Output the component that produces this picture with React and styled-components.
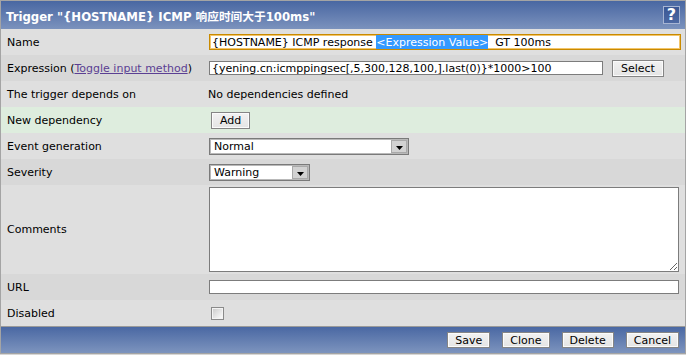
import React from "react";
import styled, { createGlobalStyle } from "styled-components";

const Global = createGlobalStyle`
  html, body { margin: 0; padding: 0; background: #d6d6d6; }
  body { font-family: "DejaVu Sans", Verdana, sans-serif; font-size: 11px; color: #000; }
  * { box-sizing: border-box; }
`;

const Frame = styled.div`
  width: 686px;
  border: 1px solid #a4a4a4;
  border-bottom: 1px solid #a4a4a4;
  background: #dedede;
`;

const Header = styled.div`
  height: 28px;
  display: flex;
  align-items: center;
  justify-content: space-between;
  padding: 0 5px 0 5px;
  background: linear-gradient(#4967a2, #7b92bd);
`;

const Title = styled.div`
  color: #fff;
  font-weight: bold;
  font-size: 11.7px;
  font-family: "DejaVu Sans", "Noto Sans CJK SC", sans-serif;
`;

const Help = styled.div`
  width: 17px;
  height: 18px;
  border: 1px solid #a7b5d3;
  background: linear-gradient(#3a5794, #4d69a3);
  color: #fff;
  font-weight: bold;
  font-size: 16px;
  line-height: 16px;
  text-align: center;
  font-family: "DejaVu Sans", sans-serif;
`;

const Row = styled.div`
  display: flex;
  align-items: center;
  min-height: ${(p) => p.$h || 26}px;
  background: ${(p) => (p.$green ? "#deedde" : p.$dark ? "#d8d8d8" : "#dfdfdf")};
`;

const Label = styled.div`
  width: 206px;
  flex: none;
  padding-left: 6px;
  white-space: nowrap;
`;

const Value = styled.div`
  flex: 1;
  display: flex;
  align-items: center;
  padding-left: ${(p) => p.$pl ?? 2}px;
`;

const Link = styled.a`
  color: #5b3f93;
  text-decoration: underline;
`;

const FakeInput = styled.div`
  width: ${(p) => p.$w}px;
  height: 16px;
  background: #fff;
  border: 1px solid #c98a00;
  box-shadow: inset 0 0 0 1px #f3c56a;
  display: flex;
  align-items: center;
  padding-left: 2px;
  white-space: pre;
  overflow: hidden;
`;

const Sel = styled.span`
  background: #3399ff;
  color: #fff;
  align-self: stretch;
  display: flex;
  align-items: center;
`;

const TextInput = styled.input`
  width: ${(p) => p.$w}px;
  height: ${(p) => p.$h || 14}px;
  border: 1px solid #7c7c7c;
  background: #fff;
  font-family: "DejaVu Sans", Verdana, sans-serif;
  font-size: 11px;
  padding: 0 2px;
  margin: 0;
  outline: none;
  color: #000;
`;

const Button = styled.button`
  height: ${(p) => p.$h || 17}px;
  padding: 0 ${(p) => p.$px ?? 7}px;
  margin-left: ${(p) => p.$ml || 0}px;
  border: 1px solid #858585;
  background: linear-gradient(#f2f2f2, #e4e4e4);
  box-shadow: inset 0 0 0 1px #fbfbfb;
  font-family: "DejaVu Sans", Verdana, sans-serif;
  font-size: 11px;
  color: #000;
  line-height: 13px;
  cursor: pointer;
`;

const SelectBox = styled.div`
  width: ${(p) => p.$w}px;
  height: 17px;
  border: 1px solid #7a7a7a;
  box-shadow: inset 0 0 0 1px #b9b9b9;
  background: #fff;
  display: flex;
  align-items: center;
  justify-content: space-between;
  padding: 0 1px 0 4px;
`;

const Arrow = styled.div`
  width: 16px;
  height: 13px;
  background: #d2d2d2;
  border: 1px solid #a9a9a9;
  display: flex;
  align-items: flex-end;
  justify-content: center;
  padding-bottom: 2px;
`;

const TextArea = styled.textarea`
  width: 470px;
  height: 85px;
  border: 1px solid #7c7c7c;
  margin: 0;
  background: #fff;
  font-family: "DejaVu Sans", sans-serif;
  font-size: 11px;
`;

const Check = styled.div`
  width: 13px;
  height: 13px;
  margin-left: 2px;
  border: 1px solid #8a8a8a;
  box-shadow: inset 0 0 0 1px #f4f4f4;
  background: linear-gradient(135deg, #c9c9c9, #ffffff);
`;

const Footer = styled.div`
  height: 27px;
  border-top: 1px solid #9a9a9a;
  background: linear-gradient(#4a68a3, #7d94be);
  display: flex;
  align-items: center;
  justify-content: flex-end;
  gap: 12px;
  padding-right: 6px;
`;

const Drop = () => (
  <Arrow>
    <svg width="7" height="4" viewBox="0 0 7 4">
      <path d="M0 0H7L3.5 4Z" fill="#000" />
    </svg>
  </Arrow>
);

export default function App() {
  return (
    <>
      <Global />
      <Frame>
        <Header>
          <Title>Trigger "{"{HOSTNAME}"} ICMP 响应时间大于100ms"</Title>
          <Help>?</Help>
        </Header>
        <Row>
          <Label>Name</Label>
          <Value>
            <FakeInput $w={472}>
              {"{HOSTNAME} ICMP response "}
              <Sel>{"<Expression Value>"}</Sel>
              {"  GT 100ms"}
            </FakeInput>
          </Value>
        </Row>
        <Row $dark>
          <Label>
            Expression (<Link href="#">Toggle input method</Link>)
          </Label>
          <Value>
            <TextInput
              $w={394}
              readOnly
              value="{yening.cn:icmppingsec[,5,300,128,100,].last(0)}*1000>100"
            />
            <Button $ml={9} $px={8}>Select</Button>
          </Value>
        </Row>
        <Row>
          <Label>The trigger depends on</Label>
          <Value $pl={1}>No dependencies defined</Value>
        </Row>
        <Row $green>
          <Label>New dependency</Label>
          <Value $pl={4}>
            <Button $px={8}>Add</Button>
          </Value>
        </Row>
        <Row>
          <Label>Event generation</Label>
          <Value>
            <SelectBox $w={200}>
              Normal
              <Drop />
            </SelectBox>
          </Value>
        </Row>
        <Row $dark>
          <Label>Severity</Label>
          <Value>
            <SelectBox $w={101}>
              Warning
              <Drop />
            </SelectBox>
          </Value>
        </Row>
        <Row $h={89}>
          <Label>Comments</Label>
          <Value>
            <TextArea />
          </Value>
        </Row>
        <Row $dark>
          <Label>URL</Label>
          <Value>
            <TextInput $w={470} $h={14} readOnly value="" />
          </Value>
        </Row>
        <Row>
          <Label>Disabled</Label>
          <Value $pl={2}>
            <Check />
          </Value>
        </Row>
        <Footer>
          <Button $h={16}>Save</Button>
          <Button $h={16}>Clone</Button>
          <Button $h={16}>Delete</Button>
          <Button $h={16}>Cancel</Button>
        </Footer>
      </Frame>
    </>
  );
}
